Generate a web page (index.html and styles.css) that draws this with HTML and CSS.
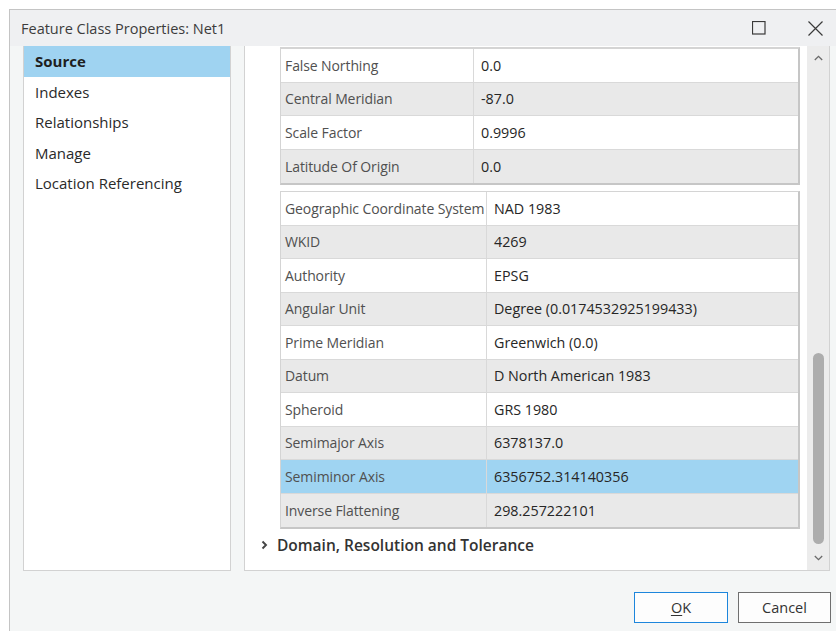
FILE: index.html
```html
<!DOCTYPE html>
<html lang="en">
<head>
<meta charset="utf-8">
<title>Feature Class Properties: Net1</title>
<link rel="stylesheet" href="styles.css">
</head>
<body>
<div class="dialog">
  <header class="titlebar">
    <span class="title">Feature Class Properties: Net1</span>
    <div class="window-controls">
      <button class="win-btn" aria-label="Maximize">
        <svg width="14" height="14" viewBox="0 0 14 14"><rect x="0.5" y="0.5" width="12.5" height="12.5" fill="none" stroke="#3a3a3a" stroke-width="1.2"/></svg>
      </button>
      <button class="win-btn" aria-label="Close">
        <svg width="15" height="15" viewBox="0 0 15 15"><path d="M0.5 0.5 L14.5 14.5 M14.5 0.5 L0.5 14.5" stroke="#3a3a3a" stroke-width="1.2" fill="none"/></svg>
      </button>
    </div>
  </header>

  <div class="body">
    <nav class="nav">
      <a class="nav-item is-active">Source</a>
      <a class="nav-item">Indexes</a>
      <a class="nav-item">Relationships</a>
      <a class="nav-item">Manage</a>
      <a class="nav-item">Location Referencing</a>
    </nav>

    <section class="panel">
      <div class="viewport">
        <div class="scroll-content">
          <div class="prop-table prop-table--proj">
            <div class="row"><div class="key">False Northing</div><div class="val">0.0</div></div>
            <div class="row"><div class="key">Central Meridian</div><div class="val">-87.0</div></div>
            <div class="row"><div class="key">Scale Factor</div><div class="val">0.9996</div></div>
            <div class="row"><div class="key">Latitude Of Origin</div><div class="val">0.0</div></div>
          </div>

          <div class="prop-table prop-table--gcs">
            <div class="row"><div class="key">Geographic Coordinate System</div><div class="val">NAD 1983</div></div>
            <div class="row"><div class="key">WKID</div><div class="val">4269</div></div>
            <div class="row"><div class="key">Authority</div><div class="val">EPSG</div></div>
            <div class="row"><div class="key">Angular Unit</div><div class="val">Degree (0.0174532925199433)</div></div>
            <div class="row"><div class="key">Prime Meridian</div><div class="val">Greenwich (0.0)</div></div>
            <div class="row"><div class="key">Datum</div><div class="val">D North American 1983</div></div>
            <div class="row"><div class="key">Spheroid</div><div class="val">GRS 1980</div></div>
            <div class="row"><div class="key">Semimajor Axis</div><div class="val">6378137.0</div></div>
            <div class="row is-selected"><div class="key">Semiminor Axis</div><div class="val">6356752.314140356</div></div>
            <div class="row"><div class="key">Inverse Flattening</div><div class="val">298.257222101</div></div>
          </div>

          <div class="expander">
            <svg class="chevron" width="8" height="10" viewBox="0 0 8 10"><path d="M1.5 1.5 L5 5 L1.5 8.5" fill="none" stroke="#444" stroke-width="1.9"/></svg>
            <span>Domain, Resolution and Tolerance</span>
          </div>
        </div>
      </div>

      <div class="scrollbar">
        <div class="sb-arrow">
          <svg width="9" height="6" viewBox="0 0 9 6"><path d="M0.8 5 L4.5 1.3 L8.2 5" fill="none" stroke="#6a6a6a" stroke-width="1.3"/></svg>
        </div>
        <div class="sb-track">
          <div class="sb-thumb" style="margin-top: 283px; height: 191px;"></div>
        </div>
        <div class="sb-arrow">
          <svg width="9" height="6" viewBox="0 0 9 6"><path d="M0.8 1 L4.5 4.7 L8.2 1" fill="none" stroke="#6a6a6a" stroke-width="1.3"/></svg>
        </div>
      </div>
    </section>
  </div>

  <footer class="footer">
    <button class="btn btn--default"><u>O</u>K</button>
    <button class="btn btn--cancel">Cancel</button>
  </footer>
</div>
</body>
</html>
```

FILE: styles.css
```css
* {
  box-sizing: border-box;
}

html, body {
  margin: 0;
  padding: 0;
  background: #ffffff;
}

body {
  font-family: "Open Sans", "Noto Sans", "Liberation Sans", sans-serif;
  color: #262626;
}

.dialog {
  margin: 9px 0 0 9px;
  width: 827px;
  height: 622px;
  border-top: 1px solid #c4c4c4;
  border-left: 1px solid #c4c4c4;
  background: #f4f6f6;
  display: flex;
  flex-direction: column;
}

/* title bar */
.titlebar {
  height: 36px;
  flex: none;
  background: #eff0f2;
  display: flex;
  align-items: center;
  justify-content: space-between;
  padding: 1px 13px 0 11px;
}

.title {
  font-size: 14.5px;
  color: #3c3c3c;
}

.window-controls {
  display: flex;
  align-items: center;
  gap: 42px;
  margin-top: -1px;
}

.win-btn {
  border: 0;
  padding: 0;
  background: transparent;
  display: flex;
  align-items: center;
  justify-content: center;
}

/* content area */
.body {
  height: 525px;
  flex: none;
  display: flex;
  padding: 0 6px 0 13px;
  gap: 13px;
}

.nav {
  width: 208px;
  flex: none;
  background: #ffffff;
  border: 1px solid #d2d2d2;
  border-top: 0;
  display: flex;
  flex-direction: column;
}

.nav-item {
  height: 30.5px;
  display: flex;
  align-items: center;
  padding-left: 11px;
  font-size: 15px;
  color: #2a2a2a;
}

.nav-item.is-active {
  background: #9fd3f1;
  font-weight: 700;
  color: #1e1e1e;
}

.panel {
  flex: 1;
  display: flex;
  background: #ffffff;
  border: 1px solid #d2d2d2;
  border-top: 0;
  min-width: 0;
}

.viewport {
  flex: 1;
  overflow: hidden;
  padding-top: 1px;
}

.scroll-content {
  padding-left: 35px;
}

/* property grids */
.prop-table {
  width: 520px;
  border: 1px solid #d4d4d4;
  border-right: 2px solid #c6c6c6;
  border-bottom: 2px solid #c6c6c6;
}

.prop-table--proj {
  border-top: 2px solid #d4d4d4;
}

.prop-table + .prop-table {
  margin-top: 6px;
}

.row {
  display: flex;
  height: 33.5px;
  border-bottom: 1px solid #d9d9d9;
  background: #ffffff;
}

.row:last-child {
  border-bottom: 0;
}

.row:nth-child(even) {
  background: #e9e9e9;
}

.row.is-selected {
  background: #9fd4f2;
}

.key,
.val {
  display: flex;
  align-items: center;
  white-space: nowrap;
}

.key {
  padding-left: 4px;
  font-size: 14px;
  letter-spacing: -0.1px;
  color: #505050;
  border-right: 1px solid #d9d9d9;
}

.val {
  padding-left: 7px;
  font-size: 14.3px;
  color: #262626;
  flex: 1;
}

.prop-table--proj .key {
  width: 193px;
}

.prop-table--gcs .key {
  width: 206px;
}

.expander {
  height: 32px;
  display: flex;
  align-items: center;
  margin-left: -19px;
  gap: 8px;
  font-size: 15.5px;
  font-weight: 600;
  color: #333333;
}

.chevron {
  flex: none;
}

/* vertical scrollbar */
.scrollbar {
  width: 22px;
  flex: none;
  background: #ececec;
  display: flex;
  flex-direction: column;
  margin-left: 7px;
}

.sb-arrow {
  height: 24px;
  flex: none;
  display: flex;
  align-items: center;
  justify-content: center;
}

.sb-track {
  flex: 1;
  display: flex;
  flex-direction: column;
  align-items: center;
}

.sb-thumb {
  width: 11px;
  border-radius: 6px;
  background: #adadad;
}

/* footer buttons */
.footer {
  flex: 1;
  display: flex;
  justify-content: flex-end;
  align-items: flex-start;
  padding: 21px 5px 0 0;
  gap: 10px;
}

.btn {
  width: 94px;
  height: 31px;
  border: 1px solid #6f6f6f;
  background: #fdfdfd;
  font-family: "Open Sans", "Noto Sans", "Liberation Sans", sans-serif;
  font-size: 14.5px;
  color: #333333;
  padding: 0;
}

.btn--cancel {
  width: 93px;
}

.btn--default {
  border-color: #1d86dc;
}

.btn u {
  text-underline-offset: 2px;
}
```
